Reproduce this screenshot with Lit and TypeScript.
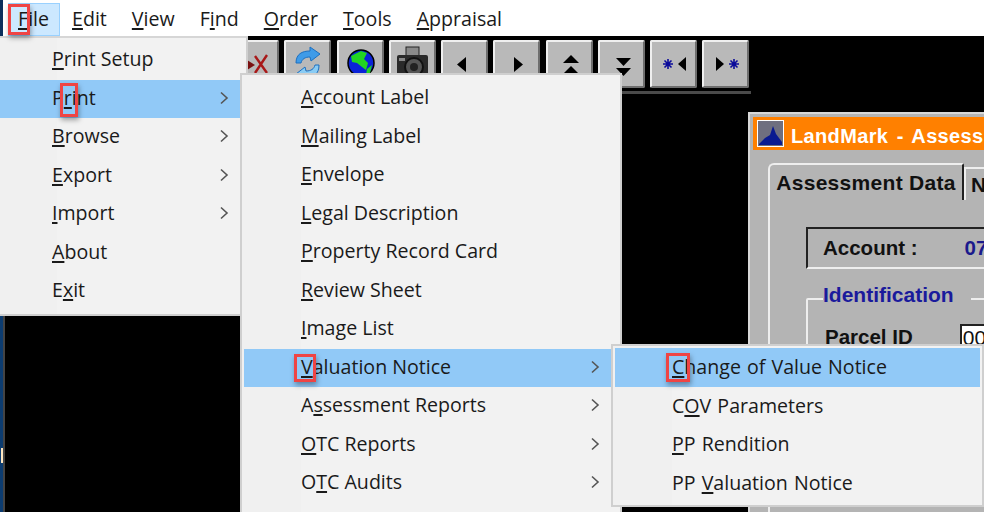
import { LitElement, html, css, svg } from "lit";
import { customElement } from "lit/decorators.js";

type Item = { pre: string; u: string; post: string; sub?: boolean; on?: boolean };
const it = (pre: string, u: string, post: string, sub = false, on = false): Item => ({ pre, u, post, sub, on });

const fileMenu = [
  it("", "P", "rint Setup"),
  it("P", "r", "int", true, true),
  it("", "B", "rowse", true),
  it("", "E", "xport", true),
  it("", "I", "mport", true),
  it("", "A", "bout"),
  it("E", "x", "it"),
];
const printMenu = [
  it("", "A", "ccount Label"),
  it("", "M", "ailing Label"),
  it("", "E", "nvelope"),
  it("", "L", "egal Description"),
  it("", "P", "roperty Record Card"),
  it("", "R", "eview Sheet"),
  it("", "I", "mage List"),
  it("", "V", "aluation Notice", true, true),
  it("A", "s", "sessment Reports", true),
  it("", "O", "TC Reports", true),
  it("O", "T", "C Audits", true),
];
const valMenu = [
  it("", "C", "hange of Value Notice", false, true),
  it("C", "O", "V Parameters"),
  it("", "P", "P Rendition"),
  it("PP ", "V", "aluation Notice"),
];
const bar = [
  ["", "F", "ile"], ["", "E", "dit"], ["", "V", "iew"], ["F", "i", "nd"],
  ["", "O", "rder"], ["", "T", "ools"], ["", "A", "ppraisal"],
];

const chevron = html`<svg class="chev" width="10" height="14" viewBox="0 0 10 14"><path d="M2 1.5 L8 7 L2 12.5" fill="none" stroke="#555" stroke-width="1.6"/></svg>`;

const tri = (d: string) => svg`<path d=${d} fill="#000"/>`;
const star = (x: number, y: number) => svg`<g stroke="#0a0a9a" stroke-width="1.6"><path d="M${x - 5} ${y}H${x + 5}M${x} ${y - 5}V${y + 5}M${x - 3.5} ${y - 3.5}L${x + 3.5} ${y + 3.5}M${x - 3.5} ${y + 3.5}L${x + 3.5} ${y - 3.5}"/></g>`;

const icons = [
  svg`<g stroke="#a81818" stroke-width="2.4" fill="none"><path d="M23 16 L35 33 M35 15 L23 33"/></g><path d="M15 20 L23 25 L15 30Z" fill="#7a1010"/>`,
  svg`<path d="M12 23 C12 14 18 11 26 11 L26 7 L36 14 L27 21 L26 17 C21 17 18 19 17 23Z" fill="#3f9be8" stroke="#1c6fc0"/><path d="M35 25 C35 34 30 37 22 37 L22 41 L12 34 L21 27 L22 31 C27 31 30 29 31 25Z" fill="#8accf4" stroke="#1c6fc0"/>`,
  svg`<circle cx="24" cy="23" r="13" fill="#0a22d8" stroke="#000" stroke-width="1.5"/><path d="M14 16 L24 11 L30 13 L27 19 L31 23 L29 30 L25 27 L20 23 L15 22Z M30 29 L35 25 L33 33 L29 35Z" fill="#22d422"/>`,
  svg`<rect x="17" y="7" width="13" height="10" fill="#8a8a8a" stroke="#222"/><rect x="8" y="15" width="31" height="24" rx="2" fill="#2a2a2a"/><circle cx="25" cy="27" r="9" fill="#555" stroke="#111" stroke-width="2"/><circle cx="25" cy="27" r="4" fill="#222"/><rect x="10" y="18" width="6" height="3" fill="#888"/>`,
  tri("M16 24.5 L25 17 V32Z"),
  tri("M30 24.5 L21 17 V32Z"),
  svg`${tri("M25 15 L33 23 H17Z")}${tri("M25 26 L33 34 H17Z")}`,
  svg`${tri("M25.5 26 L33 18 H18Z")}${tri("M25.5 36 L33 28 H18Z")}`,
  svg`${star(18, 24)}${tri("M28 24 L36 17 V31Z")}`,
  svg`${tri("M22 24 L14 17 V31Z")}${star(32, 24)}`,
];

@customElement("app-root")
export class AppRoot extends LitElement {
  static styles = css`
    :host {
      display: flex;
      flex-direction: column;
      width: 984px;
      height: 512px;
      position: relative;
      overflow: hidden;
      background: #000;
      font-family: "Open Sans", "Noto Sans", sans-serif;
      color: #1a1a1a;
    }
    u { text-underline-offset: 2px; text-decoration-thickness: 1.5px; }
    .menubar {
      height: 36px;
      flex: none;
      box-sizing: border-box;
      background: #fff;
      display: flex;
      align-items: center;
      padding-left: 5px;
      font-size: 19.6px;
      border-left: 3px solid #0c2f5c;
    }
    .bar-item {
      height: 33px;
      margin-top: 2px;
      box-sizing: border-box;
      display: flex;
      align-items: center;
      padding: 0 9px 2px 9px;
      border: 1px solid transparent;
      margin-right: 5px;
    }
    .bar-item.open { background: #cce8ff; border-color: #99d1ff; padding-right: 10px; margin-right: 2px; }
    .desktop { flex: 1; position: relative; border-left: 3px solid #0c3c70; }
    .desktop::before {
      content: "";
      position: absolute;
      left: 0; top: 0; bottom: 0; width: 2px;
      background: #444;
    }
    .desktop::after {
      content: "";
      position: absolute;
      left: -2px; top: 412px; width: 2px; height: 15px;
      background: #ffe6c0;
    }
    .toolbar {
      display: flex;
      gap: 5.25px;
      margin-left: 229px;
      padding: 4px 0 3px 0;
      border-bottom: 3px solid #4a4a4a;
      width: 519px;
    }
    .tbtn {
      width: 47px;
      height: 48px;
      background: #b9b9b9;
      border-radius: 2px;
      box-sizing: border-box;
      border: 2px solid;
      border-color: #efefef #6e6e6e #6e6e6e #efefef;
      flex: none;
      display: flex;
      align-items: center;
      justify-content: center;
    }
    .tbtn svg { display: block; margin: -2px; }
    .window {
      position: absolute;
      left: 745px;
      top: 76px;
      width: 300px;
      height: 460px;
      box-sizing: border-box;
      background: #b4b4b4;
      border: 2px solid #d8d8d8;
      padding: 3px;
      font-family: "Liberation Sans", Arial, sans-serif;
      display: flex;
      flex-direction: column;
    }
    .title {
      height: 33px;
      flex: none;
      background: #ff8000;
      color: #fff;
      display: flex;
      align-items: center;
      gap: 7px;
      padding-left: 4px;
      font-weight: 700;
      font-size: 20px;
      letter-spacing: 0.35px;
      word-spacing: 2.5px;
      white-space: nowrap;
    }
    .title span { padding-top: 5px; }
    .logo { display: block; flex: none; }
    .tabs { display: flex; margin: 13px 0 0 15px; align-items: flex-start; }
    .tab {
      height: 37px;
      width: 196px;
      box-sizing: border-box;
      border: 2px solid #eee;
      border-bottom: 0;
      border-right: 2px solid #222;
      border-radius: 6px 2px 0 0;
      font-weight: 700;
      font-size: 21px;
      letter-spacing: 0.3px;
      display: flex;
      align-items: center;
      justify-content: center;
      color: #111;
    }
    .tab.next {
      width: 60px;
      height: 33px;
      margin-top: 4px;
      border-radius: 0;
      border-right: 0;
      justify-content: flex-start;
      padding-left: 5px;
    }
    .pane {
      margin-left: 15px;
      border-left: 2px solid #eee;
      flex: 1;
      padding: 27px 0 0 36px;
    }
    .account {
      height: 42px;
      box-sizing: border-box;
      border: 2px solid;
      border-color: #222 #eee #eee #222;
      display: flex;
      align-items: center;
      padding-left: 15px;
      font-weight: 700;
      font-size: 20.5px;
      gap: 47px;
      color: #111;
    }
    .account b { color: #1a1a8c; }
    .group {
      margin-top: 29px;
      border: 2px solid #eee;
      border-radius: 2px 0 0 0;
      height: 120px;
      padding: 0 0 0 15px;
      position: relative;
    }
    .legend {
      display: inline-block;
      background: #b4b4b4;
      color: #1a1a9c;
      font-weight: 700;
      font-size: 21px;
      padding: 0 17px 0 0;
      margin-top: -17px;
      vertical-align: top;
    }
    .row { display: flex; gap: 47px; align-items: center; margin-top: 6px; font-weight: 700; font-size: 20.5px; color: #111; }
    .row span { padding-left: 2px; }
    .input { background: #fff; border: 2px solid #222; width: 60px; height: 26px; font-size: 21px; line-height: 24px; font-weight: 400; box-sizing: border-box; padding-left: 1px; overflow: hidden; flex: none; }
    .menu {
      position: absolute;
      box-sizing: border-box;
      background: linear-gradient(to right, #f0f0f0 59px, #f2f2f2 59px);
      border: 2px solid #cfcfcf;
      padding: 2px;
      font-size: 19.6px;
    }
    .menu.file { left: -4px; top: 36px; width: 252px; height: 280px; border-top-color: #d6d6d6; padding-top: 3px; }
    .menu.print { left: 240px; top: 73px; width: 382px; height: 460px; padding-top: 4px; }
    .menu.val { left: 611px; top: 344px; width: 373px; height: 163px; word-spacing: 1px; }
    .item {
      height: 38.5px;
      display: flex;
      align-items: center;
      padding: 0 0 3px 52px;
      box-sizing: border-box;
      position: relative;
      white-space: nowrap;
    }
    .print .item { padding-left: 57px; }
    .val .item { padding: 0 0 1px 57px; }
    .item.on { background: #91c9f7; }
    .chev { position: absolute; right: 15px; top: 11px; }
    .print .chev { right: 18px; }
    .mark {
      position: absolute;
      box-sizing: border-box;
      border: 3px solid #ef4444;
      box-shadow: 1px 3px 5px rgba(0, 0, 0, 0.35);
    }
    .mark.m1 { left: 8px; top: 4px; width: 22px; height: 31px; }
    .mark.m2 { left: 60px; top: 83px; width: 18px; height: 34px; }
    .mark.m3 { left: 294px; top: 354px; width: 22px; height: 28px; }
    .mark.m4 { left: 666px; top: 353px; width: 24px; height: 29px; }
  `;

  private label(p: { pre: string; u: string; post: string }) {
    return html`<span>${p.pre}<u>${p.u}</u>${p.post}</span>`;
  }

  private menu(cls: string, items: Item[]) {
    return html`<div class="menu ${cls}">
      ${items.map(
        (m) => html`<div class="item ${m.on ? "on" : ""}">${this.label(m)}${m.sub ? chevron : ""}</div>`
      )}
    </div>`;
  }

  render() {
    return html`
      <div class="menubar">
        ${bar.map(
          ([pre, u, post], i) =>
            html`<div class="bar-item ${i === 0 ? "open" : ""}">${this.label({ pre, u, post })}</div>`
        )}
      </div>
      <div class="desktop">
        <div class="toolbar">
          ${icons.map(
            (ic) => html`<div class="tbtn"><svg width="47" height="48" viewBox="0 0 47 48">${ic}</svg></div>`
          )}
        </div>
        <div class="window">
          <div class="title">
            <svg class="logo" width="27" height="27" viewBox="0 0 27 27">
              <rect x="0.5" y="0.5" width="26" height="26" fill="#6f6f7f" stroke="#fff"/>
              <path d="M2 24 L8 18 L13 15 L16 6 L19 14 L25 22 L25 25 L2 25Z" fill="#0a1a90"/>
            </svg>
            <span>LandMark - Assessment</span>
          </div>
          <div class="tabs">
            <div class="tab">Assessment Data</div>
            <div class="tab next">Notes</div>
          </div>
          <div class="pane">
            <div class="account"><span>Account :</span><b>07</b></div>
            <div class="group">
              <div class="legend">Identification</div>
              <div class="row"><span>Parcel ID</span><div class="input">00</div></div>
            </div>
          </div>
        </div>
      </div>
      ${this.menu("file", fileMenu)}
      ${this.menu("print", printMenu)}
      ${this.menu("val", valMenu)}
      <div class="mark m1"></div>
      <div class="mark m2"></div>
      <div class="mark m3"></div>
      <div class="mark m4"></div>
    `;
  }
}
